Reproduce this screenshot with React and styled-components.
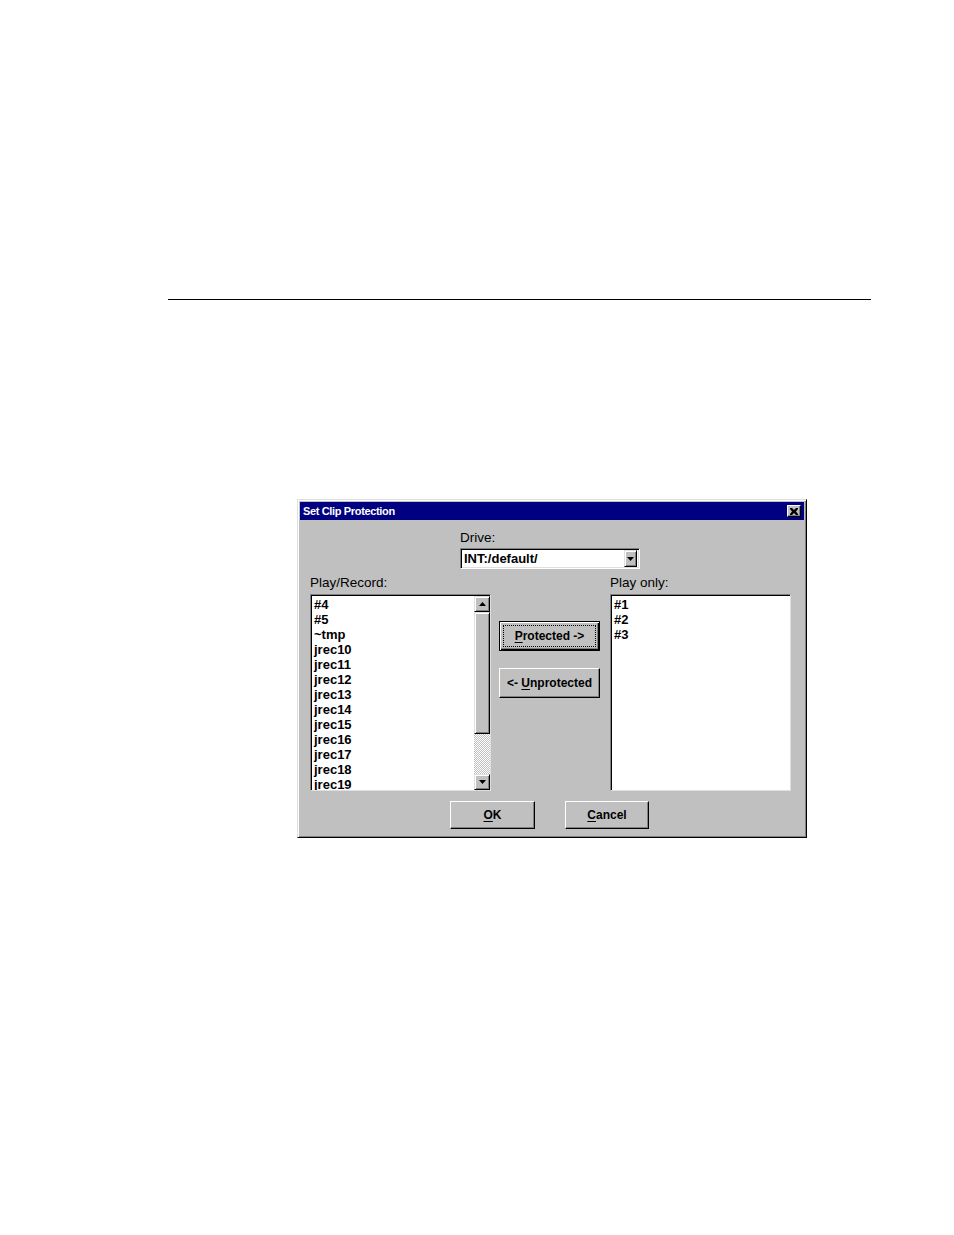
import React from "react";
import styled, { createGlobalStyle } from "styled-components";

const Global = createGlobalStyle`
  body {
    margin: 0;
    background: #ffffff;
    font-family: "Liberation Sans", Arial, sans-serif;
  }
`;

const leftItems = ["#4", "#5", "~tmp", "jrec10", "jrec11", "jrec12", "jrec13", "jrec14", "jrec15", "jrec16", "jrec17", "jrec18", "jrec19"];
const rightItems = ["#1", "#2", "#3"];

export default function App() {
    return (
        <>
            <Global />
            <Page>
                <Rule />
                <Dialog>
                    <TitleBar>
                        <Title>Set Clip Protection</Title>
                        <CloseBox>
                            <svg width="8" height="7" viewBox="0 0 8 7">
                                <path d="M0 0h2l2 2 2-2h2v1L6 3.5 8 6v1H6L4 5 2 7H0V6l2-2.5L0 1z" fill="#000" />
                            </svg>
                        </CloseBox>
                    </TitleBar>
                    <Body>
                        <DriveGroup>
                            <Label>Drive:</Label>
                            <Combo>
                                <ComboText>INT:/default/</ComboText>
                                <ArrowButton $w={13} $h={17}>
                                    <svg width="7" height="4" viewBox="0 0 7 4">
                                        <path d="M0 0h7L3.5 4z" fill="#000" />
                                    </svg>
                                </ArrowButton>
                            </Combo>
                        </DriveGroup>
                        <Columns>
                            <Label>Play/Record:</Label>
                            <span />
                            <Label>Play only:</Label>
                            <ListBox>
                                <Items>
                                    {leftItems.map((t) => (
                                        <Item key={t}>{t}</Item>
                                    ))}
                                </Items>
                                <ScrollBar>
                                    <ArrowButton $w={16} $h={16}>
                                        <svg width="7" height="4" viewBox="0 0 7 4">
                                            <path d="M0 4h7L3.5 0z" fill="#000" />
                                        </svg>
                                    </ArrowButton>
                                    <Thumb />
                                    <Track />
                                    <ArrowButton $w={16} $h={16}>
                                        <svg width="7" height="4" viewBox="0 0 7 4">
                                            <path d="M0 0h7L3.5 4z" fill="#000" />
                                        </svg>
                                    </ArrowButton>
                                </ScrollBar>
                            </ListBox>
                            <Middle>
                                <Button $default $w={101} $h={30}>
                                    <Focus><span><u>P</u>rotected -&gt;</span></Focus>
                                </Button>
                                <Button $w={101} $h={30}>
                                    <span>&lt;- <u>U</u>nprotected</span>
                                </Button>
                            </Middle>
                            <ListBox>
                                <Items>
                                    {rightItems.map((t) => (
                                        <Item key={t}>{t}</Item>
                                    ))}
                                </Items>
                            </ListBox>
                        </Columns>
                        <Footer>
                            <Button $w={85} $h={28}><span><u>O</u>K</span></Button>
                            <Button $w={84} $h={28}><span><u>C</u>ancel</span></Button>
                        </Footer>
                    </Body>
                </Dialog>
            </Page>
        </>
    );
}

const Page = styled.div`
    width: 954px;
    height: 1235px;
    box-sizing: border-box;
    padding: 299px 0 0 168px;
    background: #ffffff;
`;

const Rule = styled.div`
    width: 703px;
    height: 1px;
    background: #000000;
`;

const Dialog = styled.div`
    margin: 199px 0 0 129px;
    width: 510px;
    height: 339px;
    box-sizing: border-box;
    background: #c0c0c0;
    border: 1px solid;
    border-color: #dfdfdf #000000 #000000 #dfdfdf;
    box-shadow: inset 1px 1px #ffffff, inset -1px -1px #808080;
    padding: 2px;
    display: flex;
    flex-direction: column;
`;

const TitleBar = styled.div`
    height: 18px;
    background: #000080;
    display: flex;
    align-items: center;
    justify-content: space-between;
    padding: 0 3px 0 3px;
`;

const Title = styled.span`
    color: #ffffff;
    font-weight: bold;
    font-size: 11px;
    letter-spacing: -0.35px;
`;

const CloseBox = styled.div`
    width: 14px;
    height: 12px;
    box-sizing: border-box;
    background: #c0c0c0;
    border: 1px solid;
    border-color: #ffffff #000000 #000000 #ffffff;
    box-shadow: inset -1px -1px #808080;
    display: flex;
    align-items: center;
    justify-content: center;
`;

const Body = styled.div`
    display: flex;
    flex-direction: column;
    padding: 10px 0 0 10px;
`;

const DriveGroup = styled.div`
    display: flex;
    flex-direction: column;
    gap: 2px;
    margin-left: 150px;
`;

const Label = styled.div`
    font-size: 13.5px;
    line-height: 16px;
    color: #000000;
`;

const Combo = styled.div`
    width: 180px;
    height: 21px;
    box-sizing: border-box;
    background: #ffffff;
    border: 1px solid;
    border-color: #808080 #ffffff #ffffff #808080;
    box-shadow: inset 1px 1px #000000, inset -1px -1px #dfdfdf;
    display: flex;
    align-items: center;
    justify-content: space-between;
    padding: 0 2px 0 3px;
`;

const ComboText = styled.span`
    font-size: 13px;
    font-weight: bold;
`;

const ArrowButton = styled.div`
    width: ${(p) => p.$w}px;
    height: ${(p) => p.$h}px;
    flex: none;
    box-sizing: border-box;
    background: #c0c0c0;
    border: 1px solid;
    border-color: #dfdfdf #000000 #000000 #dfdfdf;
    box-shadow: inset 1px 1px #ffffff, inset -1px -1px #808080;
    display: flex;
    align-items: center;
    justify-content: center;
`;

const Columns = styled.div`
    margin-top: 6px;
    display: grid;
    grid-template-columns: 181px 119px 181px;
    grid-template-rows: 16px 197px;
    row-gap: 3px;
`;

const ListBox = styled.div`
    box-sizing: border-box;
    height: 197px;
    background: #ffffff;
    border: 1px solid;
    border-color: #808080 #dfdfdf #dfdfdf #808080;
    box-shadow: inset 1px 1px #000000;
    display: flex;
    overflow: hidden;
    padding: 1px 0 0 1px;
`;

const Items = styled.div`
    flex: 1;
    padding: 1px 0 0 2px;
`;

const Item = styled.div`
    font-size: 13px;
    font-weight: bold;
    line-height: 15px;
    height: 15px;
    white-space: nowrap;
`;

const ScrollBar = styled.div`
    width: 16px;
    display: flex;
    flex-direction: column;
`;

const Thumb = styled.div`
    height: 122px;
    box-sizing: border-box;
    background: #c0c0c0;
    border: 1px solid;
    border-color: #dfdfdf #000000 #000000 #dfdfdf;
    box-shadow: inset 1px 1px #ffffff, inset -1px -1px #808080;
`;

const Track = styled.div`
    flex: 1;
    background: repeating-conic-gradient(#c0c0c0 0 25%, #ffffff 0 50%) 0 0 / 2px 2px;
`;

const Middle = styled.div`
    display: flex;
    flex-direction: column;
    gap: 17px;
    padding: 27px 0 0 8px;
`;

const Button = styled.div`
    width: ${(p) => p.$w}px;
    height: ${(p) => p.$h}px;
    box-sizing: border-box;
    background: #c0c0c0;
    border: 1px solid;
    border-color: ${(p) => (p.$default ? "#000000" : "#ffffff #000000 #000000 #ffffff")};
    box-shadow: ${(p) =>
        p.$default
            ? "inset 1px 1px #ffffff, inset -1px -1px #000000, inset -2px -2px #808080"
            : "inset -1px -1px #808080"};
    display: flex;
    align-items: center;
    justify-content: center;
    font-size: 12px;
    font-weight: bold;
    color: #000000;
    white-space: pre;
    padding: ${(p) => (p.$default ? "3px" : "0")};

    u {
        text-decoration: underline;
        text-underline-offset: 2px;
    }
`;

const Focus = styled.div`
    flex: 1;
    align-self: stretch;
    display: flex;
    align-items: center;
    justify-content: center;
    border: 1px dotted #000000;
`;

const Footer = styled.div`
    display: flex;
    gap: 30px;
    margin: 10px 0 0 140px;
`;
